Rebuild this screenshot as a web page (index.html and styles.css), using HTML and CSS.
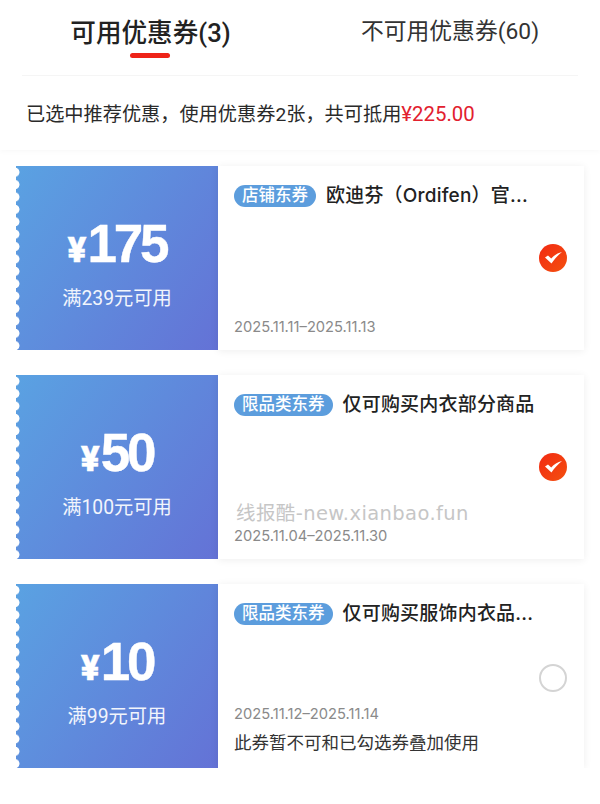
FILE: index.html
```html
<!DOCTYPE html>
<html lang="zh-CN">
<head>
  <meta charset="UTF-8">
  <meta name="viewport" content="width=device-width, initial-scale=1.0">
  <title>优惠券</title>
  <link rel="stylesheet" href="styles.css">
</head>
<body>
  <header class="top">
    <nav class="tabs">
      <div class="tab tab-active">可用优惠券(3)</div>
      <div class="tab">不可用优惠券(60)</div>
    </nav>
    <p class="summary">已选中推荐优惠，使用优惠券2张，共可抵用<span class="summary-price">¥225.00</span></p>
  </header>

  <main class="list">
    <section class="coupon">
      <div class="coupon-value">
        <div class="amount"><span class="yen">¥</span>175</div>
        <div class="limit">满239元可用</div>
      </div>
      <div class="coupon-body">
        <div class="coupon-info">
          <div class="coupon-head">
            <span class="badge">店铺东券</span>
            <span class="coupon-title">欧迪芬（Ordifen）官...</span>
          </div>
          <div class="date">2025.11.11–2025.11.13</div>
        </div>
        <svg class="check" viewBox="0 0 28 28">
          <circle cx="14" cy="14" r="14" fill="url(#checkFill)"/>
          <path d="M6 13.5 L9 11.5 L12.2 14.5 C15 11.5 18.5 9 23 8 C18.5 11.5 15.5 15 12.5 19.5 Z" fill="#fff"/>
          <defs>
            <linearGradient id="checkFill" x1="0" y1="0" x2="1" y2="1">
              <stop offset="0" stop-color="#f22a12"/>
              <stop offset="1" stop-color="#f4500f"/>
            </linearGradient>
          </defs>
        </svg>
      </div>
    </section>

    <section class="coupon">
      <div class="coupon-value">
        <div class="amount"><span class="yen">¥</span>50</div>
        <div class="limit">满100元可用</div>
      </div>
      <div class="coupon-body">
        <div class="coupon-info">
          <div class="coupon-head">
            <span class="badge">限品类东券</span>
            <span class="coupon-title">仅可购买内衣部分商品</span>
          </div>
          <div class="date">2025.11.04–2025.11.30</div>
        </div>
        <svg class="check" viewBox="0 0 28 28">
          <circle cx="14" cy="14" r="14" fill="url(#checkFill)"/>
          <path d="M6 13.5 L9 11.5 L12.2 14.5 C15 11.5 18.5 9 23 8 C18.5 11.5 15.5 15 12.5 19.5 Z" fill="#fff"/>
        </svg>
        <div class="watermark">线报酷-new.xianbao.fun</div>
      </div>
    </section>

    <section class="coupon">
      <div class="coupon-value">
        <div class="amount"><span class="yen">¥</span>10</div>
        <div class="limit">满99元可用</div>
      </div>
      <div class="coupon-body">
        <div class="coupon-info">
          <div class="coupon-head">
            <span class="badge">限品类东券</span>
            <span class="coupon-title">仅可购买服饰内衣品...</span>
          </div>
          <div class="date">2025.11.12–2025.11.14</div>
          <div class="note">此券暂不可和已勾选券叠加使用</div>
        </div>
        <div class="check check-empty"></div>
      </div>
    </section>
  </main>
</body>
</html>
```

FILE: styles.css
```css
body {
  font-family: Roboto, "Noto Sans CJK SC", sans-serif;
  margin: 0;
  padding: 0;
  background: #fff;
  color: #222;
}
.top {
  height: 150px;
  box-shadow: 0 1px 6px rgba(0, 0, 0, 0.035);
}
.tabs {
  display: grid;
  grid-template-columns: 1fr 1fr;
  height: 76px;
  margin: 0 22px;
  border-bottom: 1px solid #f5f5f5;
  box-sizing: border-box;
}
.tab {
  text-align: center;
  font-size: 22.8px;
  line-height: 32px;
  padding-top: 16px;
  padding-left: 22px;
  color: #333;
}
.tab-active {
  position: relative;
  font-size: 25.6px;
  font-weight: 500;
  color: #222;
  padding-top: 17px;
  padding-left: 0;
  padding-right: 21px;
}
.tab-active::after {
  content: "";
  position: absolute;
  left: 108px;
  top: 53px;
  width: 40px;
  height: 5px;
  border-radius: 3px;
  background: #ee2318;
}
.summary {
  margin: 0;
  padding: 1px 26px 0;
  font-size: 19.2px;
  line-height: 74px;
  color: #2a2a2a;
}
.summary-price {
  font-size: 20.4px;
  color: #e2202e;
}
.list {
  display: flex;
  flex-direction: column;
  gap: 25.5px;
  padding: 16px 16px 0;
}
.coupon {
  display: flex;
  height: 183.5px;
  width: 568px;
}
.coupon-value {
  position: relative;
  width: 202px;
  flex: none;
  display: flex;
  flex-direction: column;
  align-items: center;
  justify-content: center;
  color: #fff;
  background: linear-gradient(125deg, #5aa2e2, #6472d6);
}
.coupon-value::before {
  content: "";
  position: absolute;
  left: 0;
  top: 0;
  bottom: 0;
  width: 4px;
  background: radial-gradient(circle at -1px 6.2px, #fff 4.2px, transparent 4.8px) 0 0 / 4px 12.4px repeat-y;
}
.amount {
  font-family: "Liberation Sans", sans-serif;
  font-size: 53px;
  font-weight: 700;
  line-height: 62px;
  letter-spacing: -3.2px;
  margin-top: 9px;
  -webkit-text-stroke: 0.4px #fff;
}
.yen {
  font-family: Roboto, sans-serif;
  font-size: 35px;
  font-weight: 900;
  letter-spacing: 0;
  margin-right: 1px;
}
.limit {
  font-size: 19.3px;
  line-height: 26px;
  margin-top: 4px;
  color: #f2f5fc;
}
.coupon-body {
  position: relative;
  flex: 1;
  min-width: 0;
  display: flex;
  align-items: center;
  padding: 19px 17px 13px 16px;
  background: #fff;
  box-shadow: 0 1px 8px rgba(0, 0, 0, 0.07);
}
.coupon-info {
  flex: 1;
  min-width: 0;
  align-self: stretch;
  display: flex;
  flex-direction: column;
}
.coupon-head {
  display: flex;
  align-items: center;
  gap: 10px;
}
.badge {
  flex: none;
  height: 22px;
  line-height: 22px;
  padding: 0 8px;
  font-size: 16.5px;
  font-weight: 500;
  color: #fff;
  background: #5c9ddd;
  border-radius: 11px;
}
.coupon-title {
  font-family: Inter, "Noto Sans CJK SC", sans-serif;
  font-size: 19px;
  letter-spacing: 0.2px;
  line-height: 20px;
  margin-top: -1px;
  font-weight: 500;
  color: #222;
  white-space: nowrap;
}
.date {
  margin-top: auto;
  font-family: Inter, sans-serif;
  font-size: 14.7px;
  line-height: 20px;
  color: #8a8a8a;
}
.note {
  margin-top: 7px;
  font-size: 17.5px;
  line-height: 24px;
  color: #333;
}
.check {
  flex: none;
  width: 28px;
  height: 28px;
  margin-left: 2px;
  margin-top: -5px;
}
.check-empty {
  box-sizing: border-box;
  border: 2px solid #d4d4d4;
  border-radius: 50%;
  margin-top: -2px;
}
.watermark {
  position: absolute;
  left: 18px;
  top: 126px;
  font-family: "DejaVu Sans", "Noto Sans CJK SC", sans-serif;
  font-size: 19.5px;
  letter-spacing: 0.4px;
  line-height: 26px;
  white-space: nowrap;
  color: #c6c6c6;
}
```
